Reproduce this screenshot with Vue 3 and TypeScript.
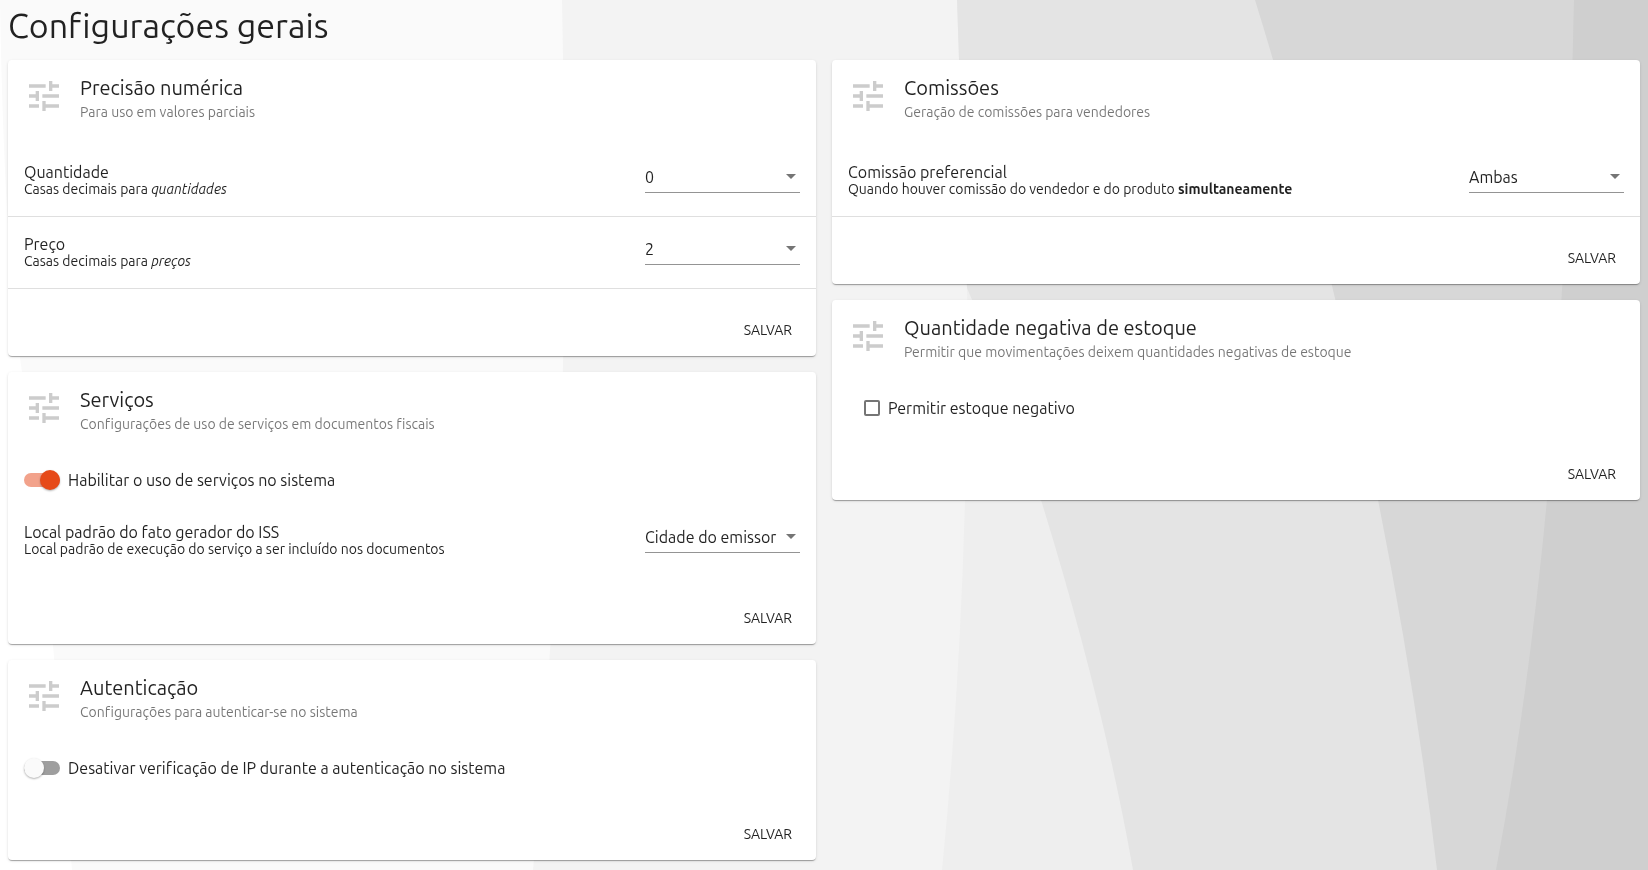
<script setup lang="ts">
import { reactive } from 'vue'

interface SelectField {
  kind: 'select'
  id: string
  label: string
  hint: string
  emphasis?: string
  strong?: string
  divided: boolean
  value: string
  options: string[]
}

interface ToggleField {
  kind: 'switch' | 'checkbox'
  id: string
  label: string
  checked: boolean
}

interface SettingsCard {
  title: string
  subtitle: string
  fields: (SelectField | ToggleField)[]
}

const decimals = ['0', '1', '2', '3', '4']

const columns = reactive<SettingsCard[][]>([
  [
    {
      title: 'Precisão numérica',
      subtitle: 'Para uso em valores parciais',
      fields: [
        { kind: 'select', id: 'quantidade', label: 'Quantidade', hint: 'Casas decimais para ', emphasis: 'quantidades', divided: true, value: '0', options: decimals },
        { kind: 'select', id: 'preco', label: 'Preço', hint: 'Casas decimais para ', emphasis: 'preços', divided: true, value: '2', options: decimals },
      ],
    },
    {
      title: 'Serviços',
      subtitle: 'Configurações de uso de serviços em documentos fiscais',
      fields: [
        { kind: 'switch', id: 'servicos', label: 'Habilitar o uso de serviços no sistema', checked: true },
        { kind: 'select', id: 'local-iss', label: 'Local padrão do fato gerador do ISS', hint: 'Local padrão de execução do serviço a ser incluído nos documentos', divided: false, value: 'Cidade do emissor', options: ['Cidade do emissor', 'Cidade do cliente'] },
      ],
    },
    {
      title: 'Autenticação',
      subtitle: 'Configurações para autenticar-se no sistema',
      fields: [
        { kind: 'switch', id: 'verificacao-ip', label: 'Desativar verificação de IP durante a autenticação no sistema', checked: false },
      ],
    },
  ],
  [
    {
      title: 'Comissões',
      subtitle: 'Geração de comissões para vendedores',
      fields: [
        { kind: 'select', id: 'comissao', label: 'Comissão preferencial', hint: 'Quando houver comissão do vendedor e do produto ', strong: 'simultaneamente', divided: true, value: 'Ambas', options: ['Ambas', 'Vendedor', 'Produto'] },
      ],
    },
    {
      title: 'Quantidade negativa de estoque',
      subtitle: 'Permitir que movimentações deixem quantidades negativas de estoque',
      fields: [
        { kind: 'checkbox', id: 'estoque-negativo', label: 'Permitir estoque negativo', checked: false },
      ],
    },
  ],
])
</script>

<template>
  <div class="page">
    <svg class="backdrop" viewBox="0 0 1648 870" preserveAspectRatio="none" aria-hidden="true">
      <rect width="1648" height="870" fill="#ffffff" />
      <path fill="#fafafa" d="M0 0Q4 250 22 372Q36 510 53 645Q62 755 72 870H1648V0Z" />
      <path fill="#f3f3f3" d="M562 0Q566 200 563 365Q560 520 550 650Q544 760 533 870H1648V0Z" />
      <path fill="#eeeeee" d="M957 0Q963 180 967 290Q970 400 965 500Q960 690 942 870H1648V0Z" />
      <path fill="#e4e4e4" d="M957 0Q963 180 967 288Q1008 380 1041 500Q1103 700 1133 870H1648V0Z" />
      <path fill="#d7d7d7" d="M1255 0Q1300 145 1333 290Q1360 400 1378 500Q1416 690 1437 870H1648V0Z" />
      <path fill="#cfcfcf" d="M1574 0Q1571 150 1562 290Q1556 400 1547 500Q1528 700 1496 870H1648V0Z" />
    </svg>

    <h1 class="page-title">Configurações gerais</h1>

    <main class="columns">
      <div v-for="(cards, index) in columns" :key="index" class="column">
        <section v-for="card in cards" :key="card.title" class="card">
          <header class="card-header">
            <svg class="tune" viewBox="0 0 24 24" aria-hidden="true">
              <path d="M3 17v2h6v-2H3zM3 5v2h10V5H3zm10 16v-2h8v-2h-8v-2h-2v6h2zM7 9v2H3v2h4v2h2V9H7zm14 4v-2H11v2h10zm-6-4h2V7h4V5h-4V3h-2v6z" />
            </svg>
            <div>
              <h2 class="card-title">{{ card.title }}</h2>
              <p class="card-subtitle">{{ card.subtitle }}</p>
            </div>
          </header>

          <div class="card-body">
            <template v-for="field in card.fields" :key="field.id">
              <div v-if="field.kind === 'select'" class="row" :class="{ divided: field.divided }">
                <label class="row-text" :for="field.id">
                  <span class="row-label">{{ field.label }}</span>
                  <span class="row-hint">{{ field.hint }}<em v-if="field.emphasis">{{ field.emphasis }}</em><strong v-if="field.strong">{{ field.strong }}</strong></span>
                </label>
                <div class="select-box">
                  <select :id="field.id" v-model="field.value">
                    <option v-for="option in field.options" :key="option">{{ option }}</option>
                  </select>
                  <svg class="caret" viewBox="0 0 10 5" aria-hidden="true"><path d="M0 0h10L5 5z" /></svg>
                </div>
              </div>
              <label v-else class="toggle-row" :class="{ indented: field.kind === 'checkbox' }">
                <input v-model="field.checked" type="checkbox" :class="field.kind" :role="field.kind === 'switch' ? 'switch' : undefined" />
                <span>{{ field.label }}</span>
              </label>
            </template>
          </div>

          <footer class="card-actions">
            <button type="button">SALVAR</button>
          </footer>
        </section>
      </div>
    </main>
  </div>
</template>

<style>
body {
  margin: 0;
  background: #fafafa;
}
</style>

<style scoped>
.page {
  box-sizing: border-box;
  min-height: 100vh;
  padding: 0 8px 8px;
  color: rgba(0, 0, 0, 0.87);
  font-family: Ubuntu, "Noto Sans", "Open Sans", sans-serif;
  font-size: 16px;
  font-variant-ligatures: none;
}

.backdrop {
  position: fixed;
  inset: 0;
  z-index: -1;
  width: 100%;
  height: 100%;
}

.page-title {
  margin: 0;
  padding: 4px 0 14px;
  font-size: 34px;
  font-weight: 400;
  line-height: 42px;
}

.columns {
  display: grid;
  grid-template-columns: 1fr 1fr;
  gap: 16px;
  align-items: start;
}

.column {
  display: flex;
  flex-direction: column;
  gap: 16px;
}

.card {
  border-radius: 4px;
  background: #fff;
  box-shadow: 0 2px 1px -1px rgba(0, 0, 0, 0.2), 0 1px 1px rgba(0, 0, 0, 0.14), 0 1px 3px rgba(0, 0, 0, 0.12);
}

.card-header {
  display: flex;
  gap: 16px;
  padding: 16px 16px 20px;
}

.tune {
  flex: none;
  width: 40px;
  height: 40px;
  fill: #ccc;
}

.card-title {
  margin: 0;
  font-size: 20px;
  font-weight: 400;
  line-height: 24px;
}

.card-subtitle {
  margin: 0;
  color: rgba(0, 0, 0, 0.54);
  font-size: 14px;
  line-height: 24px;
}

.card-body {
  padding-bottom: 16px;
}

.row {
  display: flex;
  align-items: flex-start;
  justify-content: space-between;
  gap: 16px;
  box-sizing: border-box;
  height: 72px;
  padding: 20px 16px 0;
}

.row.divided {
  box-shadow: 0 1px 0 #dfdfdf;
}

.row-label,
.row-hint {
  display: block;
  line-height: 17px;
}

.row-hint {
  font-size: 14px;
}

.select-box {
  position: relative;
  flex: none;
  width: 155px;
}

.select-box select {
  box-sizing: border-box;
  width: 100%;
  height: 29px;
  padding: 0 20px 2px 0;
  border: 0;
  border-bottom: 1px solid #949494;
  border-radius: 0;
  appearance: none;
  background: none;
  color: inherit;
  font: inherit;
}

.caret {
  position: absolute;
  top: 10px;
  right: 4px;
  width: 10px;
  height: 5px;
  fill: #757575;
  pointer-events: none;
}

.toggle-row {
  display: flex;
  align-items: center;
  gap: 8px;
  height: 48px;
  padding: 0 16px;
}

.toggle-row.indented {
  padding-left: 32px;
}

.switch {
  display: flex;
  align-items: center;
  flex: none;
  width: 36px;
  height: 14px;
  margin: 0;
  border-radius: 7px;
  appearance: none;
  background: #9e9e9e;
}

.switch::before {
  flex: none;
  width: 20px;
  height: 20px;
  border-radius: 50%;
  background: #fafafa;
  box-shadow: 0 1px 2px rgba(0, 0, 0, 0.3);
  content: "";
}

.switch:checked {
  justify-content: flex-end;
  background: #f2a28b;
}

.switch:checked::before {
  background: #e64a19;
}

.checkbox {
  flex: none;
  box-sizing: border-box;
  width: 16px;
  height: 16px;
  margin: 0;
  border: 2px solid #757575;
  border-radius: 2px;
  appearance: none;
}

.checkbox:checked {
  background: #e64a19;
}

.card-actions {
  display: flex;
  justify-content: flex-end;
  padding: 8px;
}

.card-actions button {
  min-width: 64px;
  height: 36px;
  padding: 0 16px;
  border: 0;
  border-radius: 4px;
  background: none;
  color: inherit;
  font: inherit;
  font-size: 14px;
}
</style>
